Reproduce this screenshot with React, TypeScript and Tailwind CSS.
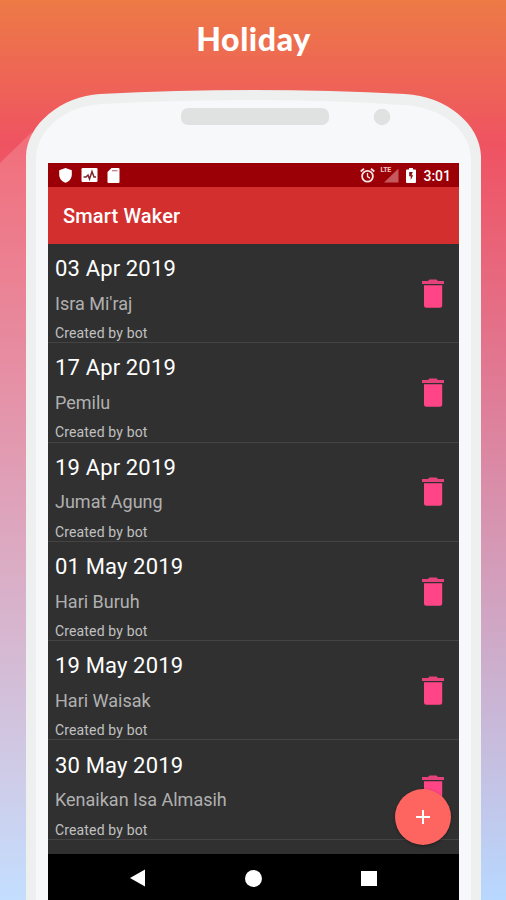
import React from 'react';

const holidays = [
  { date: '03 Apr 2019', name: "Isra Mi'raj" },
  { date: '17 Apr 2019', name: 'Pemilu' },
  { date: '19 Apr 2019', name: 'Jumat Agung' },
  { date: '01 May 2019', name: 'Hari Buruh' },
  { date: '19 May 2019', name: 'Hari Waisak' },
  { date: '30 May 2019', name: 'Kenaikan Isa Almasih' },
];

const PhoneFrame = () => (
  <svg className="absolute inset-0" width="506" height="900" viewBox="0 0 506 900">
    <path d="M0 163 L32 132 V900 H0 Z" fill="#fff" fillOpacity="0.17" />
    <path
      d="M26 900 V156 C27 124 62 96 100 94 Q176 90 253 90 Q330 90 405 94 C446 96 480 124 481 156 V900 Z"
      fill="#eeefef"
    />
    <path
      d="M36 900 V160 C36 130 64 106 102 104 Q178 100 253 100 Q328 100 403 105 C442 107 471 130 471 160 V900 Z"
      fill="#f6f8f9"
    />
    <rect x="181" y="108" width="148" height="17" rx="7" fill="#e0e1e1" />
    <circle cx="382" cy="117" r="8.3" fill="#e0e1e1" />
  </svg>
);

const TrashIcon = () => (
  <svg className="w-[22px] h-[29px]" viewBox="0 0 22 29" fill="#ff4586">
    <path d="M0 2h6l1.5-1.6h7L16 2h6v3H0z" fill="#e5427c" />
    <path d="M2 6.2h18.2v20a2.5 2.5 0 0 1-2.5 2.5H4.500A2.5 2.5 0 0 1 2 26.2z" />
  </svg>
);

const StatusBar = () => (
  <div className="h-6 bg-[#9b0006] flex items-center pl-[11px] pr-2 text-white">
    <svg width="13" height="15" viewBox="0 0 13 15" fill="#fff">
      <path d="M6.5 0 12.8 2.3v4.5c0 3.6-2.6 6.8-6.3 8C2.8 13.6.2 10.4.2 6.8V2.3z" />
    </svg>
    <svg className="ml-[9px]" width="17" height="14" viewBox="0 0 17 14">
      <rect x="0.5" y="0" width="16" height="14" rx="1.2" fill="#fff" />
      <path d="M2.5 9H5l2-2 1.5 4L11 3.5l2 5.5h2" fill="none" stroke="#7d2630" strokeWidth="1.5" />
    </svg>
    <svg className="ml-[9px]" width="13" height="15" viewBox="0 0 13 15">
      <path d="M4.5 0h7a1 1 0 0 1 1 1v13a1 1 0 0 1-1 1h-10a1 1 0 0 1-1-1V4z" fill="#fff" />
      <path d="M5 2.7h5.5" stroke="#c98286" strokeWidth="1.3" />
    </svg>
    <svg className="ml-auto" width="15" height="15" viewBox="0 0 15 15" fill="none" stroke="#f6e4e4">
      <circle cx="7.5" cy="8.3" r="5.4" strokeWidth="1.8" />
      <path d="M7.5 5v3.6l2.5 1.5" strokeWidth="1.3" />
      <path d="M.7 3.5 4 .8M14.3 3.5 11 .8" strokeWidth="1.8" />
    </svg>
    {/* Network type and signal */}
    <div className="relative ml-[4px] w-5 h-4">
      <svg width="20" height="16" viewBox="0 0 20 16">
        <path d="M19.5 1.5v14H5z" fill="#c4585c" />
      </svg>
      <span className="absolute left-px -top-px text-[7px] leading-[9px] font-bold tracking-[-0.3px] text-[#ecc9ca]">LTE</span>
    </div>
    <svg className="ml-[7px]" width="10" height="15" viewBox="0 0 10 15">
      <path d="M3 0h4v1.5h2a1 1 0 0 1 1 1V14a1 1 0 0 1-1 1H1a1 1 0 0 1-1-1V2.5a1 1 0 0 1 1-1h2z" fill="#fff" />
      <path d="M6.8 4H3.2v4.3h1.5V12l2.5-4.7H5.5z" fill="#8d1016" />
    </svg>
    <span className="ml-[7px] mt-px text-[14px] leading-none font-medium">3:01</span>
  </div>
);

const NavBar = () => (
  <div className="h-[46px] bg-black flex items-center justify-between px-[82px] pt-[2px]">
    <svg width="15" height="18" viewBox="0 0 15 18" fill="#fff">
      <path d="M15 .5v17L0 9z" />
    </svg>
    <div className="w-[17px] h-[17px] rounded-full bg-white" />
    <div className="w-4 h-[15px] bg-white" />
  </div>
);

const App = () => {
  return (
    <div className="relative w-[506px] h-[900px] overflow-hidden bg-[linear-gradient(180deg,#ed7a46_0px,#ef5362_145px,#e27690_360px,#d49bb8_560px,#c6bfe0_760px,#b8d8ff_900px)] font-['Roboto',sans-serif]">
      <PhoneFrame />
      <div className="relative h-full flex flex-col">
        <h1 className="h-[163px] shrink-0 pt-[20px] pl-px text-center text-[32px] leading-[38px] font-black tracking-[0.6px] text-white font-['Lato',sans-serif]">
          Holiday
        </h1>

        <div className="relative ml-12 w-[411px] flex-1 flex flex-col bg-[#303030]">
          <StatusBar />
          <div className="h-[57px] bg-[#d32f2e] px-[15px] pt-px flex items-center">
            <h2 className="text-[20px] leading-6 font-medium tracking-[0.15px] text-white">Smart Waker</h2>
          </div>

          {/* Holiday list */}
          <div className="flex-1 overflow-hidden">
            {holidays.map((holiday) => (
              <div
                key={holiday.date}
                className="h-[99.3px] border-b border-[#444] pl-[7px] pr-[15px] flex items-center justify-between"
              >
                <div className="pt-[11px]">
                  <p className="text-[22px] leading-[30px] tracking-[0.15px] text-white">{holiday.date}</p>
                  <p className="mt-[7.5px] text-[18px] leading-6 text-[#b0b0b0]">{holiday.name}</p>
                  <p className="mt-[7.5px] text-[14px] leading-5 tracking-[0.15px] text-[#c0c0c0]">Created by bot</p>
                </div>
                <TrashIcon />
              </div>
            ))}
          </div>
          <NavBar />

          {/* Add button */}
          <button className="absolute right-2 bottom-[55px] w-14 h-14 rounded-full bg-[#ff6560] shadow-[0_1px_3px_rgba(0,0,0,0.4)] flex items-center justify-center">
            <svg width="16" height="16" viewBox="0 0 16 16" stroke="#fff" strokeWidth="2">
              <path d="M8 1v14M1 8h14" />
            </svg>
          </button>
        </div>
      </div>
    </div>
  );
};

export default App;
